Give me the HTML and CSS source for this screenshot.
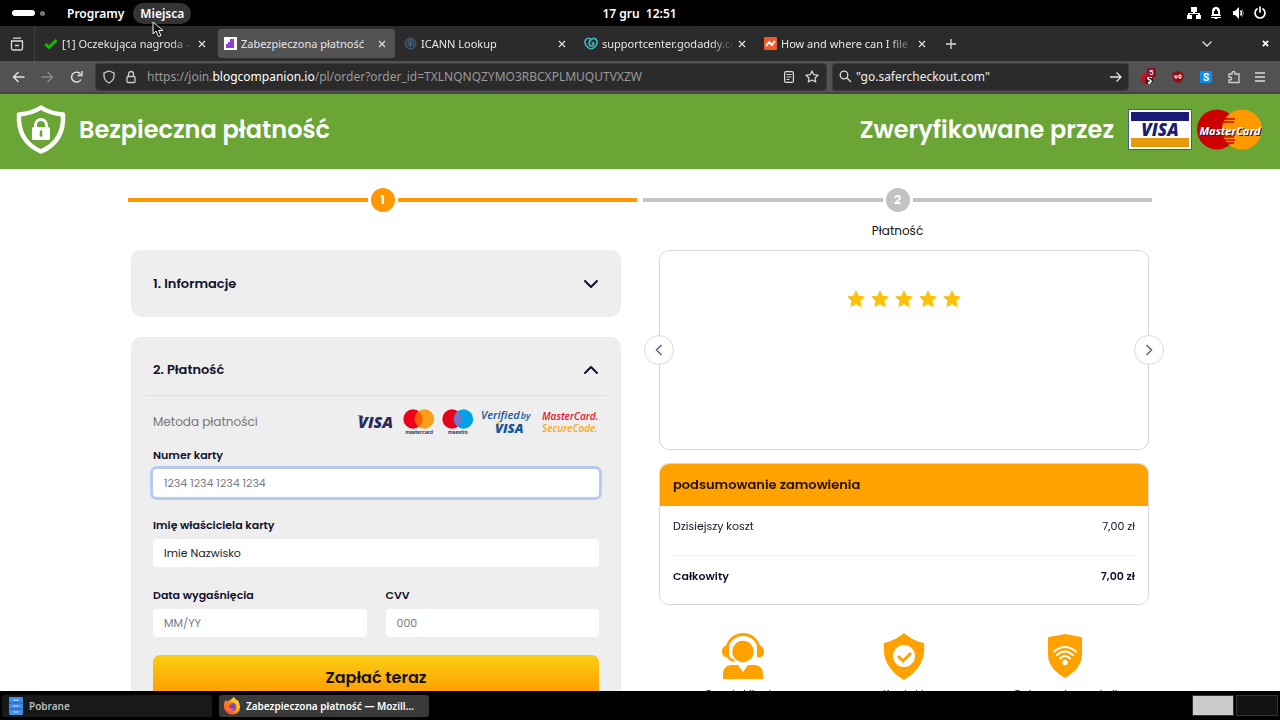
FILE: index.html
```html
<!DOCTYPE html>
<html lang="pl">
<head>
<meta charset="utf-8">
<title>Zabezpieczona płatność</title>
<link rel="stylesheet" href="styles.css">
</head>
<body>
<header class="topbar">
  <div class="topbar-side">
    <span class="workspace"></span><span class="workspace-dot"></span>
    <button class="menu-btn" type="button">Programy</button>
    <button class="menu-btn menu-btn-hover" type="button">Miejsca</button>
  </div>
  <time class="clock">17 gru&nbsp; 12:51</time>
  <div class="topbar-side topbar-status">
    <svg width="14" height="14" viewBox="0 0 14 14" fill="#fff"><path d="M4 1h6v5H8v1h5v2h1v4H9V9h2V8H3v1h2v4H0V9h1V7h5V6H4z"/></svg>
    <svg width="14" height="14" viewBox="0 0 14 14" fill="#fff"><path fill-rule="evenodd" d="M7 1c-3 0-4 2-4 4v3L2 10h10l-1-2V5c0-2-1-4-4-4zM5 5h1V4c0-1 2-1 2 0v1h1v3H5z"/><path d="M2 11h10v1H9l-1 1H6l-1-1H2z"/></svg>
    <svg width="14" height="14" viewBox="0 0 14 14" fill="#fff"><path d="M2 5h2l4-4v12L4 9H2z"/><path d="M9.500 4.500q2 2.500 0 5" fill="none" stroke="#fff" stroke-width="1.500"/><path d="M11 3q3 4 0 8" fill="none" stroke="#777"/></svg>
    <svg width="14" height="14" viewBox="0 0 14 14" fill="none" stroke="#fff" stroke-width="1.700" stroke-linecap="round"><path d="M4 3a5 5 0 1 0 6 0M7 1v5"/></svg>
  </div>
</header>

<nav class="tabbar">
  <button class="tab-history" type="button" aria-label="Karty"><svg width="14" height="14" viewBox="0 0 14 14" fill="none" stroke="#ddd" stroke-width="1.300"><path d="M3 1.200h8M1 4h12M5 8.500h4"/><path d="M1.500 4v7.500q0 1.500 1.500 1.500h8q1.500 0 1.500-1.500V4"/></svg></button>
  <div class="tab">
    <svg width="14" height="14" viewBox="0 0 14 14" fill="none" stroke="#12bc00" stroke-width="3"><path d="M1.500 7l3.500 3.500L12.500 3"/></svg>
    <span class="tab-title">[1] Oczekująca nagroda - A</span>
    <button class="tab-close" type="button" aria-label="Zamknij"><svg width="8" height="8" viewBox="0 0 8 8"><path d="M1 1l6 6M7 1L1 7"/></svg></button>
  </div>
  <div class="tab tab-active">
    <svg width="13" height="13" viewBox="0 0 13 13"><path d="M0 0h13v13H0z" fill="#fff"/><path d="M6 2h4v3H6zM4 5h6v2H4zM2 7h8v4H2z" fill="#8f3fd0"/></svg>
    <span class="tab-title">Zabezpieczona płatność</span>
    <button class="tab-close" type="button" aria-label="Zamknij"><svg width="8" height="8" viewBox="0 0 8 8"><path d="M1 1l6 6M7 1L1 7"/></svg></button>
  </div>
  <div class="tab">
    <svg width="13" height="13" viewBox="0 0 13 13" fill="none" stroke="#426077" stroke-width="1"><circle cx="6.500" cy="6.500" r="5.500"/><path d="M1 6h11M6.500 1v11M3 2l7 9M10 2L3 11M1.500 4.500Q6 1 11.500 4.500M1.500 9Q6 5 11.500 9"/></svg>
    <span class="tab-title">ICANN Lookup</span>
    <button class="tab-close" type="button" aria-label="Zamknij"><svg width="8" height="8" viewBox="0 0 8 8"><path d="M1 1l6 6M7 1L1 7"/></svg></button>
  </div>
  <div class="tab">
    <svg width="14" height="13" viewBox="0 0 14 13" fill="none" stroke="#3cb6b9" stroke-width="1.700"><path d="M6.500 12C2 10 0 6 1.500 3 3 .500 6 .800 8 3"/><path d="M6.500 12C11 11 14 7 12.800 3.500 11.500 0 7.500 1 5.800 4 4.500 6.500 5.200 9 7 9c1.600 0 2.600-1.500 2.600-3H7.500"/></svg>
    <span class="tab-title">supportcenter.godaddy.com</span>
    <button class="tab-close" type="button" aria-label="Zamknij"><svg width="8" height="8" viewBox="0 0 8 8"><path d="M1 1l6 6M7 1L1 7"/></svg></button>
  </div>
  <div class="tab">
    <svg width="13" height="13" viewBox="0 0 13 13"><rect width="13" height="13" rx="1" fill="#f1592a"/><path d="M2.500 8.500L5 5l3 3 2.500-3.500" fill="none" stroke="#fff" stroke-width="2" stroke-linejoin="round" stroke-linecap="round"/></svg>
    <span class="tab-title">How and where can I file a</span>
    <button class="tab-close" type="button" aria-label="Zamknij"><svg width="8" height="8" viewBox="0 0 8 8"><path d="M1 1l6 6M7 1L1 7"/></svg></button>
  </div>
  <button class="tab-new" type="button" aria-label="Nowa karta"><svg width="10" height="10" viewBox="0 0 10 10" fill="none" stroke="#ddd" stroke-width="1.300"><path d="M5 0v10M0 5h10"/></svg></button>
  <div class="tabbar-end">
    <svg width="12" height="8" viewBox="0 0 12 8" fill="none" stroke="#ddd" stroke-width="1.300"><path d="M1.500 1.500L6 6l4.500-4.500"/></svg>
    <svg width="7" height="7" viewBox="0 0 8 8" fill="none" stroke="#fff" stroke-width="2"><path d="M1 1l6 6M7 1L1 7"/></svg>
  </div>
</nav>

<div class="toolbar">
  <div class="nav-btns">
    <svg width="13" height="12" viewBox="0 0 13 12" fill="none" stroke="#e6e6e6" stroke-width="1.400"><path d="M12.500 6H1.500M6.500 1l-5 5 5 5"/></svg>
    <svg width="13" height="12" viewBox="0 0 13 12" fill="none" stroke="#8a8a8a" stroke-width="1.400"><path d="M.500 6h11M6.500 1l5 5-5 5"/></svg>
    <svg width="13" height="12" viewBox="0 0 13 12" fill="none" stroke="#e6e6e6" stroke-width="1.400"><path d="M11 8.500A5 5 0 1 1 10.500 3M12 0v4.500H7.500"/></svg>
  </div>
  <div class="urlbar">
    <svg width="12" height="14" viewBox="0 0 12 14" fill="none" stroke="#ccc" stroke-width="1.300"><path d="M6 1l5 2v3c0 3-2 5.500-5 7-3-1.500-5-4-5-7V3z"/></svg>
    <svg width="10" height="14" viewBox="0 0 10 14" fill="none" stroke="#ccc" stroke-width="1.300"><rect x="1" y="6.500" width="8" height="6" rx="1"/><path d="M2.500 6V4a2.500 2.500 0 0 1 5 0v2"/></svg>
    <span class="url">https://join.<b>blogcompanion.io</b>/pl/order?order_id=TXLNQNQZYMO3RBCXPLMUQUTVXZW</span>
    <svg width="10" height="12" viewBox="0 0 10 12" fill="none" stroke="#ddd" stroke-width="1.200"><rect x=".600" y=".600" width="8.800" height="10.800" rx="1.500"/><path d="M2.500 3.500h5M2.500 6h5M2.500 8.500h3"/></svg>
    <svg width="14" height="13" viewBox="0 0 14 13" fill="none" stroke="#ddd" stroke-width="1.200" stroke-linejoin="round"><path d="M7 1l1.800 3.700 4.200.500-3 2.800.800 4L7 10l-3.800 2 .800-4L1 5.200l4.200-.500z"/></svg>
  </div>
  <label class="search">
    <svg width="13" height="13" viewBox="0 0 13 13" fill="none" stroke="#ddd" stroke-width="1.300"><circle cx="5" cy="5" r="3.800"/><path d="M8 8l4 4"/></svg>
    <input class="search-input" type="text" value="&quot;go.safercheckout.com&quot;" aria-label="Szukaj">
    <svg width="12" height="12" viewBox="0 0 12 12" fill="none" stroke="#e6e6e6" stroke-width="1.300"><path d="M0 6h11M6.500 1.500L11 6l-4.500 4.500"/></svg>
  </label>
  <div class="extensions">
    <svg width="18" height="18" viewBox="0 0 18 18"><circle cx="8" cy="10.500" r="6" fill="#d00f20"/><circle cx="10" cy="12" r="4" fill="#222"/><path d="M13 9.500c-4-2-6 1-3 2s3 3-1 3M12 13l-2 3" fill="none" stroke="#fff" stroke-width="1.400"/><rect x="8" y="0" width="9" height="9" rx="1" fill="#8e1027"/><text x="10" y="7" class="badge-text">5</text></svg>
    <svg width="14" height="14" viewBox="0 0 14 14"><path d="M7 1l5.500 2v4c0 3-2.500 5-5.500 6.500C4 12 1.500 10 1.500 7V3z" fill="#900d18"/><path d="M4 5v3h2V5M8 5h2v3H8z" fill="none" stroke="#fff"/></svg>
    <svg width="14" height="14" viewBox="0 0 14 14"><rect x="1" y="1" width="12" height="12" rx="1" fill="#0d8df2"/><text x="4" y="11" class="ext-s">S</text></svg>
    <svg width="14" height="14" viewBox="0 0 14 14" fill="none" stroke="#ccc" stroke-width="1.400"><path d="M2 4h3V3a1.500 1.500 0 0 1 3 0v1h4v8.500H2V10h1a1.500 1.500 0 0 0 0-3H2z"/></svg>
    <svg width="10" height="10" viewBox="0 0 10 10" stroke="#ddd" stroke-width="1.300"><path d="M0 1h10M0 5h10M0 9h10"/></svg>
  </div>
</div>

<main class="page">
  <div class="banner">
    <svg width="52" height="52" viewBox="0 0 52 52"><path d="M26 3.500q9 6 22 7c1 18-6 30-22 37C10 40.500 3 28 4 10.500q13-1 22-7z" fill="none" stroke="#fff" stroke-width="4.500" stroke-linejoin="round"/><rect x="17" y="23" width="18" height="13" rx="1.500" fill="#fff"/><path d="M20.500 24v-3a5.500 5.500 0 0 1 11 0v3" fill="none" stroke="#fff" stroke-width="3"/><path d="M26 27.500v4" stroke="#6aa536" stroke-width="2.500" stroke-linecap="round"/></svg>
    <h1 class="banner-title">Bezpieczna płatność</h1>
    <span class="banner-title banner-verified">Zweryfikowane przez</span>
    <svg width="64" height="41" viewBox="0 0 64 41"><path d="M.500.500h63v40H.500z" fill="#fff" stroke="#46589b"/><path d="M3 3h58v9H3z" fill="#1a1c75"/><path d="M3 29h58v9H3z" fill="#e89908"/><text x="32" y="27" class="visa-card">VISA</text></svg>
    <svg width="67" height="41" viewBox="0 0 67 41"><circle cx="21" cy="20.500" r="20" fill="#c00"/><circle cx="46" cy="20.500" r="20" fill="#f90"/><path d="M27 10h12M26 13h12M26 28h12M27 31h12M29 34h9" stroke="#c00" stroke-width="1.500"/><text x="34" y="26" class="mc-text">MasterCard</text></svg>
  </div>

  <div class="container">
    <ol class="steps">
      <li class="step step-active"><div class="step-track"><span class="step-num">1</span></div></li>
      <li class="step"><div class="step-track"><span class="step-num">2</span></div><span class="step-label">Płatność</span></li>
    </ol>

    <div class="columns">
      <div class="left">
        <section class="card card-closed">
          <button class="card-head" type="button">1. Informacje
            <svg width="16" height="10" viewBox="0 0 16 10"><path d="M2 2l6 6 6-6"/></svg></button>
        </section>
        <section class="card">
          <button class="card-head card-head-open" type="button">2. Płatność
            <svg width="16" height="10" viewBox="0 0 16 10"><path d="M2 8l6-6 6 6"/></svg></button>
          <form class="pay-form">
            <div class="methods">
              <span class="methods-title">Metoda płatności</span>
              <svg width="40" height="16" viewBox="0 0 40 16"><text x="2" y="14" class="visa-logo">VISA</text><path d="M1 1.500h5l2 3z" fill="#2c2a5a"/></svg>
              <svg width="32" height="26" viewBox="0 0 32 26"><circle cx="10" cy="10" r="9.700" fill="#eb001b"/><circle cx="21.500" cy="10" r="9.700" fill="#f79e1b"/><path d="M15.700 2.200a9.700 9.700 0 0 1 0 15.600 9.700 9.700 0 0 1 0-15.600z" fill="#ff5f00"/><text x="16" y="25" class="brand-word">mastercard</text></svg>
              <svg width="32" height="26" viewBox="0 0 32 26"><circle cx="10" cy="10" r="9.700" fill="#eb001b"/><circle cx="21.500" cy="10" r="9.700" fill="#00a2e5"/><path d="M15.700 2.200a9.700 9.700 0 0 1 0 15.600 9.700 9.700 0 0 1 0-15.600z" fill="#7375cf"/><text x="16" y="25" class="brand-word">maestro</text></svg>
              <svg width="54" height="26" viewBox="0 0 54 26"><text x="0" y="10" class="vbv">Verified<tspan dx="1" class="vbv-by">by</tspan></text><text x="14" y="24" class="vbv-visa">VISA</text><path d="M14 13.500h4l1 3z" fill="#f7a823"/></svg>
              <svg width="57" height="26" viewBox="0 0 57 26"><text x="0" y="11" class="sec sec-top">MasterCard.</text><text x="0" y="23" class="sec sec-bottom">SecureCode.</text></svg>
            </div>
            <label class="field"><span>Numer karty</span><input class="input input-focus" type="text" placeholder="1234 1234 1234 1234" autofocus></label>
            <label class="field"><span>Imię właściciela karty</span><input class="input" type="text" value="Imie Nazwisko"></label>
            <div class="field-row">
              <label class="field"><span>Data wygaśnięcia</span><input class="input" type="text" placeholder="MM/YY"></label>
              <label class="field"><span>CVV</span><input class="input" type="text" placeholder="000"></label>
            </div>
            <button class="pay-btn" type="button">Zapłać teraz</button>
          </form>
        </section>
      </div>

      <div class="right">
        <section class="carousel">
          <div class="stars">
            <svg width="18" height="18" viewBox="0 0 18 18"><path d="M9 1l2.400 5.300 5.800.600-4.300 3.900 1.200 5.700L9 13.600l-5.100 2.900 1.200-5.700L.800 6.900l5.800-.600z"/></svg>
            <svg width="18" height="18" viewBox="0 0 18 18"><path d="M9 1l2.400 5.300 5.800.600-4.300 3.900 1.200 5.700L9 13.600l-5.100 2.900 1.200-5.700L.800 6.900l5.800-.600z"/></svg>
            <svg width="18" height="18" viewBox="0 0 18 18"><path d="M9 1l2.400 5.300 5.800.600-4.300 3.900 1.200 5.700L9 13.600l-5.100 2.900 1.200-5.700L.800 6.900l5.800-.600z"/></svg>
            <svg width="18" height="18" viewBox="0 0 18 18"><path d="M9 1l2.400 5.300 5.800.600-4.300 3.900 1.200 5.700L9 13.600l-5.100 2.900 1.200-5.700L.800 6.900l5.800-.600z"/></svg>
            <svg width="18" height="18" viewBox="0 0 18 18"><path d="M9 1l2.400 5.300 5.800.600-4.300 3.900 1.200 5.700L9 13.600l-5.100 2.900 1.200-5.700L.800 6.900l5.800-.600z"/></svg>
          </div>
          <button class="arrow arrow-prev" type="button" aria-label="Poprzednia"><svg width="8" height="12" viewBox="0 0 8 12"><path d="M6.500 1l-5 5 5 5"/></svg></button>
          <button class="arrow arrow-next" type="button" aria-label="Następna"><svg width="8" height="12" viewBox="0 0 8 12"><path d="M1.500 1l5 5-5 5"/></svg></button>
        </section>
        <section class="summary">
          <h2 class="summary-title">podsumowanie zamowienia</h2>
          <table class="costs">
            <tr><td>Dzisiejszy koszt</td><td>7,00 zł</td></tr>
            <tr class="total"><td>Całkowity</td><td>7,00 zł</td></tr>
          </table>
        </section>
        <div class="perks">
          <div class="perk"><svg width="44" height="47" viewBox="0 0 44 47" fill="#ffa200"><circle cx="22" cy="18.500" r="10.700"/><path d="M6 17a16 15.500 0 0 1 32 0" fill="none" stroke="#ffa200" stroke-width="3"/><path d="M8 13v11c-4 1-7-1-7-5.500S4 12 8 13zM36 13v11c4 1 7-1 7-5.500S40 12 36 13z"/><path d="M7 22q1 5 5.500 5.500" fill="none" stroke="#ffa200" stroke-width="2.500" stroke-linecap="round"/><path d="M11 32h6l5 7 5-7h6c5 0 9 3 9 9v5H2v-5c0-6 4-9 9-9z"/></svg><span>Serwis klienta</span></div>
          <div class="perk"><svg width="44" height="47" viewBox="0 0 44 47"><path d="M22 0q9 8 20 10c2 18-7 29-20 37C9 39 0 28 2 10 13 8 22 0 22 0z" fill="#ffa200"/><circle cx="22" cy="23" r="11" fill="#fff"/><path d="M16 23l5 5 8-8" fill="none" stroke="#ffa200" stroke-width="3"/></svg><span>Kontakt</span></div>
          <div class="perk"><svg width="44" height="47" viewBox="0 0 44 47"><path d="M22 1l16 3q1 0 1 2v15c0 11-7 18-17 24C12 39 5 32 5 21V6q0-2 1-2z" fill="#ffa200"/><g fill="none" stroke="#fff" stroke-width="2" stroke-linecap="round"><path d="M11 18.500q11-9 22 0M14 22q8-7 16 0M17 25.500q5-5 10 0"/></g><circle cx="22" cy="29.500" r="2.700" fill="#fff"/></svg><span>Ochrona transakcji</span></div>
        </div>
      </div>
    </div>
  </div>
</main>

<footer class="taskbar">
  <button class="task" type="button"><svg width="16" height="20" viewBox="0 0 16 20"><rect x="1" y="1" width="14" height="18" rx="1" fill="#438de6"/><path d="M1 7h14M1 13h14" stroke="#1a5fb4"/><path d="M5 4h6M5 10h6M5 16h6" stroke="#99c1f1" stroke-width="1.500"/></svg><span>Pobrane</span></button>
  <button class="task task-active" type="button"><svg width="18" height="18" viewBox="0 0 20 20"><defs><linearGradient id="fox" x1="1" y1="0" x2="0" y2="1"><stop offset="0" stop-color="#fff44f"/><stop offset=".5" stop-color="#ff980e"/><stop offset="1" stop-color="#ff1f5a"/></linearGradient></defs><path d="M12 0q2 2 3 4l1-1q3 4 3 8c0 5-4 8.500-9 8.500S1 15 1 10.500C1 7 2 5 3 3l1 2 3-1q2-1 5-4z" fill="url(#fox)"/><circle cx="10" cy="11" r="4.500" fill="#7541c9"/><path d="M3 6q3-1 5 1h3q-1 2-4 2-1 3 2 4 3 0 4-1-2 4-6 3-5-2-4-9z" fill="#ff7a1a"/></svg><span>Zabezpieczona płatność — Mozill…</span></button>
  <div class="pager"><span class="pager-on"></span><span class="pager-off"></span></div>
</footer>
<svg class="pointer" width="12" height="17" viewBox="0 0 12 17"><path d="M1 1v12l3-3 2.500 5.500L9 14.500 6.500 9.500H11z" fill="#111" stroke="#eee"/></svg>
</body>
</html>
```

FILE: styles.css
```css
* { box-sizing: border-box; }
body { margin: 0; height: 100vh; display: flex; flex-direction: column; overflow: hidden; background: #000; font-family: Poppins, Inter, sans-serif; font-size: 11px; color: #11112a; }
button { border: 0; padding: 0; background: none; font: inherit; color: inherit; }
input { font: inherit; color: inherit; min-width: 0; }
svg { flex: none; display: block; }

.topbar, .tabbar, .toolbar, .taskbar { flex: none; display: flex; align-items: center; font-family: "Noto Sans", sans-serif; font-size: 12px; color: #fff; }
.topbar { height: 26px; font-weight: 600; padding: 0 12px; }
.topbar-side { flex: 1; display: flex; align-items: center; }
.topbar-status { justify-content: flex-end; gap: 8px; padding-right: 1px; }
.workspace { width: 23px; height: 6px; border-radius: 3px; background: #fff; }
.workspace-dot { width: 5px; height: 5px; border-radius: 50%; background: #777; margin: 0 15px 0 5px; }
.menu-btn { height: 21px; line-height: 21px; padding: 0 7px; border-radius: 11px; }
.menu-btn-hover { background: #353535; margin-left: 2px; }

.tabbar { height: 35px; background: #2b2b2b; color: #e6e6e6; font-size: 11px; }
.tab-history { width: 35px; height: 35px; display: grid; place-items: center; border-right: 1px solid #404040; }
.tab { width: 177px; height: 29px; margin-left: 3px; padding: 0 9px 0 6px; display: flex; align-items: center; gap: 4px; border-radius: 3px; }
.tab-active { background: #525252; }
.tab-title { flex: 1; min-width: 0; overflow: hidden; white-space: nowrap; mask-image: linear-gradient(to right, #000 82%, transparent); }
.tab-active .tab-title { mask-image: none; }
.tab-close svg { fill: none; stroke: #ddd; stroke-width: 1.200; }
.tab-new { margin-left: 1px; width: 30px; height: 30px; display: grid; place-items: center; }
.tabbar-end { margin-left: auto; display: flex; align-items: center; gap: 49px; padding-right: 11px; }

.toolbar { height: 33px; background: #525252; border-bottom: 2px solid #454545; }
.nav-btns { display: flex; gap: 16px; padding: 0 13px 0 12px; }
.urlbar, .search { height: 26px; background: #2b2b2b; border-radius: 3px; display: flex; align-items: center; box-shadow: 0 0 0 1px #3d3d3d; }
.urlbar { flex: 716; min-width: 0; gap: 11px; padding: 0 7px; }
.url { flex: 1; min-width: 0; white-space: nowrap; overflow: hidden; color: #9a9a9a; }
.url b { font-weight: 400; color: #fff; }
.search { flex: 283; margin-left: 7px; gap: 4px; padding: 0 6px; }
.search-input { flex: 1; border: 0; padding: 0; outline: 0; background: none; color: #eee; }
.extensions { display: flex; align-items: center; gap: 14px; padding: 0 15px 0 11px; }
.badge-text { font: 8px Roboto, sans-serif; fill: #fff; }
.ext-s { font: 700 10px Roboto, sans-serif; fill: #fff; }

.page { flex: 1; min-height: 0; overflow: hidden; background: #fff; }
.banner { height: 75px; background: #6aa536; padding: 0 17px 4px 15px; display: flex; align-items: center; color: #fff; }
.banner-title { margin: 0 0 0 12px; font-size: 24px; font-weight: 600; line-height: 36px; }
.banner-verified { margin: 0 14px 0 auto; }
.banner svg + svg { margin-left: 4px; }
.visa-card { font: italic 800 17px "Open Sans", sans-serif; fill: #1a1c75; text-anchor: middle; }
.mc-text { font: italic 700 11px "Open Sans", sans-serif; fill: #fff; text-anchor: middle; text-shadow: 1px 1px 0 #2b1a4f; }

.container { padding: 0 10%; }
.steps { list-style: none; margin: 0; padding: 18px 0 0; display: grid; grid-template-columns: 1fr 1fr; gap: 6px; height: 81px; }
.step { text-align: center; --tone: #c3c3c3; }
.step-active { --tone: #ff9800; }
.step-track { height: 26px; display: flex; align-items: center; gap: 3px; }
.step-track::before, .step-track::after { content: ""; flex: 1; height: 4px; background: var(--tone); }
.step-num { width: 24px; height: 24px; border-radius: 50%; background: var(--tone); color: #fff; font-size: 13px; font-weight: 600; line-height: 24px; }
.step-label { display: block; margin-top: 8px; font-size: 12px; line-height: 20px; color: #111; }
.columns { display: grid; grid-template-columns: 1fr 1fr; gap: 38px; padding: 0 3px; }

.card { background: #eee; border-radius: 10px; padding: 0 14px; }
.card-closed { margin-bottom: 20px; }
.card-head { width: 100%; height: 67px; padding: 0 8px; display: flex; align-items: center; justify-content: space-between; font-size: 13px; font-weight: 600; }
.card-head svg { fill: none; stroke: #11112a; stroke-width: 2; stroke-linecap: round; stroke-linejoin: round; }
.card-head-open { height: 59px; padding-top: 7px; border-bottom: 1px solid #e2e2e2; }
.pay-form { padding: 12px 8px 20px; }
.methods { height: 27px; display: flex; align-items: center; gap: 7px; margin-bottom: 10px; }
.methods-title { margin-right: auto; font-size: 12px; color: #777; }
.visa-logo { font: italic 800 16px "Open Sans", sans-serif; fill: #2c2a5a; }
.brand-word { font: 600 5px Inter, sans-serif; text-anchor: middle; fill: #222; }
.vbv { font: italic 600 11px "Open Sans", sans-serif; fill: #11569c; }
.vbv-by { font-size: 9px; }
.vbv-visa { font: italic 800 13px "Open Sans", sans-serif; fill: #11569c; }
.sec { font: italic 600 10px "Open Sans", sans-serif; }
.sec-top { fill: #e8112d; }
.sec-bottom { fill: #f7a823; }
.field { display: block; margin-bottom: 18px; font-weight: 600; line-height: 20px; }
.field span { display: block; margin-bottom: 4px; }
.input { display: block; width: 100%; height: 28px; border: 0; border-radius: 4px; background: #fff; padding: 0 11px; font-weight: 400; color: #222; outline: 0; }
.input::placeholder { color: #777b83; }
.input-focus { box-shadow: 0 0 0 3px #b5cbf3; }
.field-row { display: grid; grid-template-columns: 1fr 1fr; gap: 19px; }
.pay-btn { width: 100%; height: 44px; border-radius: 7px; background: linear-gradient(#f8cf15, #ff9e00 85%); color: #111; font-size: 16px; font-weight: 600; }

.carousel { position: relative; height: 200px; border: 1px solid #d8d8d8; border-radius: 10px; padding-top: 39px; }
.stars { display: flex; justify-content: center; gap: 6px; fill: #ffc107; stroke: #ffc107; stroke-width: 1; stroke-linejoin: round; }
.arrow { position: absolute; top: 84px; width: 30px; height: 30px; border: 1px solid #d8d8d8; border-radius: 50%; background: #fff; display: grid; place-items: center; }
.arrow svg { fill: none; stroke: #5b6c80; stroke-width: 1.600; }
.arrow-prev { left: -16px; }
.arrow-next { right: -16px; }
.summary { margin-top: 13px; border: 1px solid #d8d8d8; border-radius: 10px; overflow: hidden; }
.summary-title { margin: 0; padding: 0 13px; background: #ffa200; line-height: 42px; font-size: 13px; font-weight: 600; color: #24120a; }
.costs { width: calc(100% - 26px); margin: 0 13px; border-collapse: collapse; }
.costs td { height: 49px; padding: 0 0 7px; border-bottom: 1px solid #f1f1f1; }
.costs td:last-child { text-align: right; }
.total { font-weight: 600; }
.costs .total td { border: 0; }
.perks { display: grid; grid-template-columns: repeat(3, 1fr); padding: 28px 3px 0; }
.perk { display: flex; flex-direction: column; align-items: center; gap: 5px; line-height: 18px; }

.taskbar { height: 29px; background: #000; gap: 7px; padding: 0 2px; font-size: 10px; }
.task { width: 210px; height: 22px; padding: 0 6px; border-radius: 3px; background: #171a19; color: #bbb; display: flex; align-items: center; gap: 5px; font-weight: 600; }
.task span { flex: 1; text-align: left; overflow: hidden; white-space: nowrap; text-overflow: ellipsis; }
.task-active { background: #3a3a3a; color: #fff; padding: 0 4px; }
.pager { margin-left: auto; display: flex; gap: 2px; }
.pager span { width: 42px; height: 21px; border: 1px solid #333; }
.pager-on { background: #ccc; }
.pager-off { background: #111; }
.pointer { position: absolute; left: 152px; top: 21px; }
```
